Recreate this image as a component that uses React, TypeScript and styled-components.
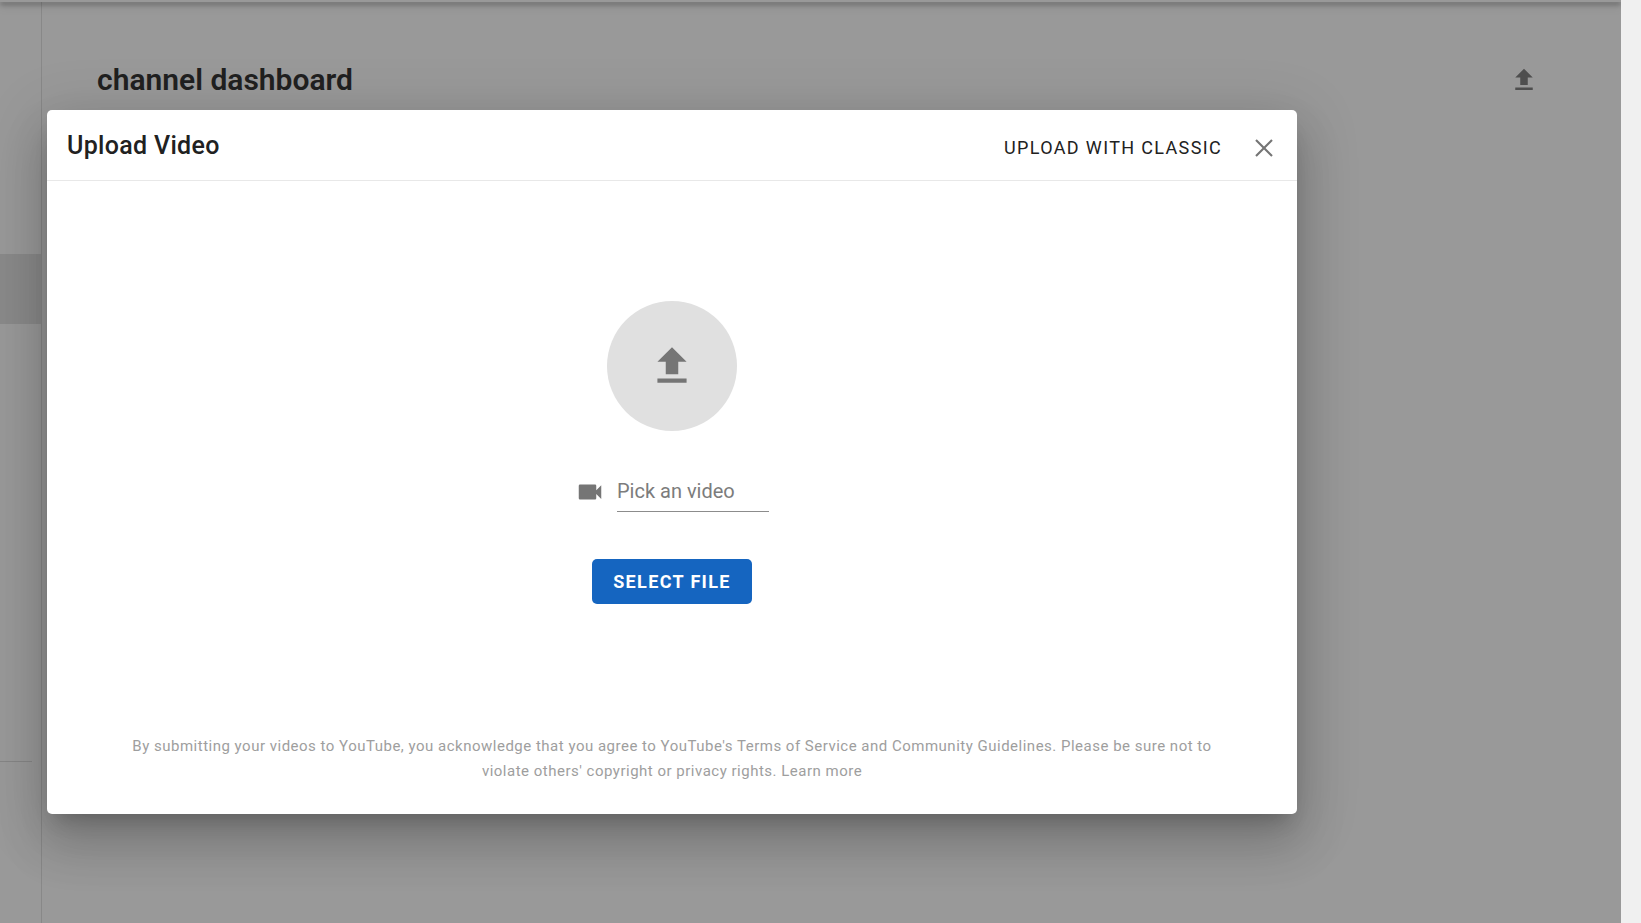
import React from "react";
import styled, { createGlobalStyle } from "styled-components";

const GlobalStyle = createGlobalStyle`
  *, *::before, *::after { box-sizing: border-box; }
  body {
    margin: 0;
    font-family: Roboto, "Liberation Sans", sans-serif;
    color: #212121;
  }
  button, input { font: inherit; color: inherit; }
`;

const Shell = styled.div`
  display: flex;
  min-height: 100vh;
`;

const ScrollGutter = styled.div`
  flex: 0 0 20px;
  background: #f0f0f0;
`;

const Page = styled.div`
  position: relative;
  flex: 1;
  min-width: 0;
  display: flex;
  flex-direction: column;
  overflow: hidden;
  background: #fff;
`;

const AppBar = styled.header`
  flex: 0 0 2px;
  z-index: 1;
  background: #fff;
  box-shadow: 0 2px 5px rgba(0, 0, 0, 0.6), 0 5px 8px rgba(0, 0, 0, 0.2);
`;

const Body = styled.div`
  flex: 1;
  display: flex;
`;

const Sidebar = styled.nav`
  flex: 0 0 42px;
  padding-top: 252px;
  border-right: 1px solid #e0e0e0;
`;

const ActiveItem = styled.div`
  height: 70px;
  background: #e4e4e4;
`;

const NavDivider = styled.hr`
  margin: 437px 9px 0 0;
  border: 0;
  border-top: 1px solid #dcdcdc;
`;

const Main = styled.main`
  flex: 1;
  padding: 58px 82px 0 55px;
`;

const PageHeading = styled.div`
  display: flex;
  align-items: center;
  justify-content: space-between;
`;

const PageTitle = styled.h1`
  margin: 0;
  font-size: 30px;
  line-height: 40px;
  font-weight: 600;
`;

const IconButton = styled.button`
  display: flex;
  padding: 0;
  border: 0;
  background: none;
  color: #757575;
  cursor: pointer;
`;

const Overlay = styled.div`
  position: absolute;
  inset: 0;
  z-index: 2;
  padding: 110px 47px 109px;
  background: rgba(33, 33, 33, 0.46);
`;

const Dialog = styled.section`
  display: flex;
  flex-direction: column;
  width: 100%;
  max-width: 1250px;
  min-height: 704px;
  border-radius: 5px;
  background: #fff;
  box-shadow: 0 14px 19px -9px rgba(0, 0, 0, 0.2),
    0 30px 48px 4px rgba(0, 0, 0, 0.14), 0 11px 58px 10px rgba(0, 0, 0, 0.12);
`;

const DialogHeader = styled.header`
  display: flex;
  align-items: flex-end;
  justify-content: space-between;
  padding: 0 18px 10px 20px;
  height: 71px;
  border-bottom: 1px solid #e8e8e8;
`;

const DialogTitle = styled.h2`
  margin: 0;
  font-size: 25px;
  line-height: 48px;
  font-weight: 500;
  letter-spacing: 0.0125em;
`;

const HeaderActions = styled.div`
  display: flex;
  align-items: center;
  gap: 6px;
`;

const Button = styled.button<{ $primary?: boolean }>`
  height: 45px;
  padding: 0 21px;
  border: 0;
  border-radius: 5px;
  font-size: 18px;
  font-weight: ${(p) => (p.$primary ? 700 : 400)};
  letter-spacing: 0.075em;
  text-transform: uppercase;
  white-space: nowrap;
  background: ${(p) => (p.$primary ? "#1565c0" : "none")};
  color: ${(p) => (p.$primary ? "#fff" : "#212121")};
  cursor: pointer;
`;

const UploadForm = styled.form`
  display: flex;
  flex-direction: column;
  align-items: center;
  padding: 120px 20px;
`;

const UploadCircle = styled.div`
  display: flex;
  align-items: center;
  justify-content: center;
  width: 130px;
  height: 130px;
  border-radius: 50%;
  background: #e0e0e0;
  color: #757575;
`;

const FileField = styled.label`
  display: flex;
  align-items: center;
  gap: 12px;
  margin: 40px 0 47px;
  color: #757575;
`;

const FileInput = styled.input`
  width: 152px;
  height: 41px;
  padding: 0;
  border: 0;
  border-bottom: 1px solid #8c8c8c;
  outline: 0;
  background: none;
  font-size: 20px;
  &::placeholder {
    color: #7c7c7c;
    opacity: 1;
  }
`;

const Terms = styled.p`
  margin: auto 80px 30px;
  font-size: 15px;
  line-height: 25px;
  letter-spacing: 0.0333em;
  text-align: center;
  color: #9e9e9e;
`;

const uploadPath = "M9,16V10H5L12,3L19,10H15V16H9M5,20V18H19V20H5Z";
const videoPath =
  "M17,10.5V7A1,1 0 0,0 16,6H4A1,1 0 0,0 3,7V17A1,1 0 0,0 4,18H16A1,1 0 0,0 17,17V13.5L21,17.5V6.5L17,10.5Z";
const closePath =
  "M19,6.2L17.8,5L12,10.8L6.2,5L5,6.2L10.8,12L5,17.8L6.2,19L12,13.2L17.8,19L19,17.8L13.2,12L19,6.2Z";

function Icon({ path, size = 30 }: { path: string; size?: number }) {
  return (
    <svg width={size} height={size} viewBox="0 0 24 24" fill="currentColor" aria-hidden="true">
      <path d={path} />
    </svg>
  );
}

export default function App() {
  return (
    <>
      <GlobalStyle />
      <Shell>
        <Page>
          <AppBar />
          <Body>
            <Sidebar>
              <ActiveItem />
              <NavDivider />
            </Sidebar>
            <Main>
              <PageHeading>
                <PageTitle>channel dashboard</PageTitle>
                <IconButton type="button" aria-label="Upload">
                  <Icon path={uploadPath} />
                </IconButton>
              </PageHeading>
            </Main>
          </Body>
          <Overlay>
            <Dialog role="dialog" aria-modal="true" aria-labelledby="upload-title">
              <DialogHeader>
                <DialogTitle id="upload-title">Upload Video</DialogTitle>
                <HeaderActions>
                  <Button type="button">Upload with classic</Button>
                  <IconButton type="button" aria-label="Close">
                    <Icon path={closePath} />
                  </IconButton>
                </HeaderActions>
              </DialogHeader>
              <UploadForm>
                <UploadCircle>
                  <Icon path={uploadPath} size={50} />
                </UploadCircle>
                <FileField>
                  <Icon path={videoPath} />
                  <FileInput type="text" placeholder="Pick an video" aria-label="Pick an video" />
                </FileField>
                <Button type="button" $primary>
                  Select File
                </Button>
              </UploadForm>
              <Terms>
                By submitting your videos to YouTube, you acknowledge that you agree to YouTube's
                Terms of Service and Community Guidelines. Please be sure not to violate others'
                copyright or privacy rights. Learn more
              </Terms>
            </Dialog>
          </Overlay>
        </Page>
        <ScrollGutter />
      </Shell>
    </>
  );
}
